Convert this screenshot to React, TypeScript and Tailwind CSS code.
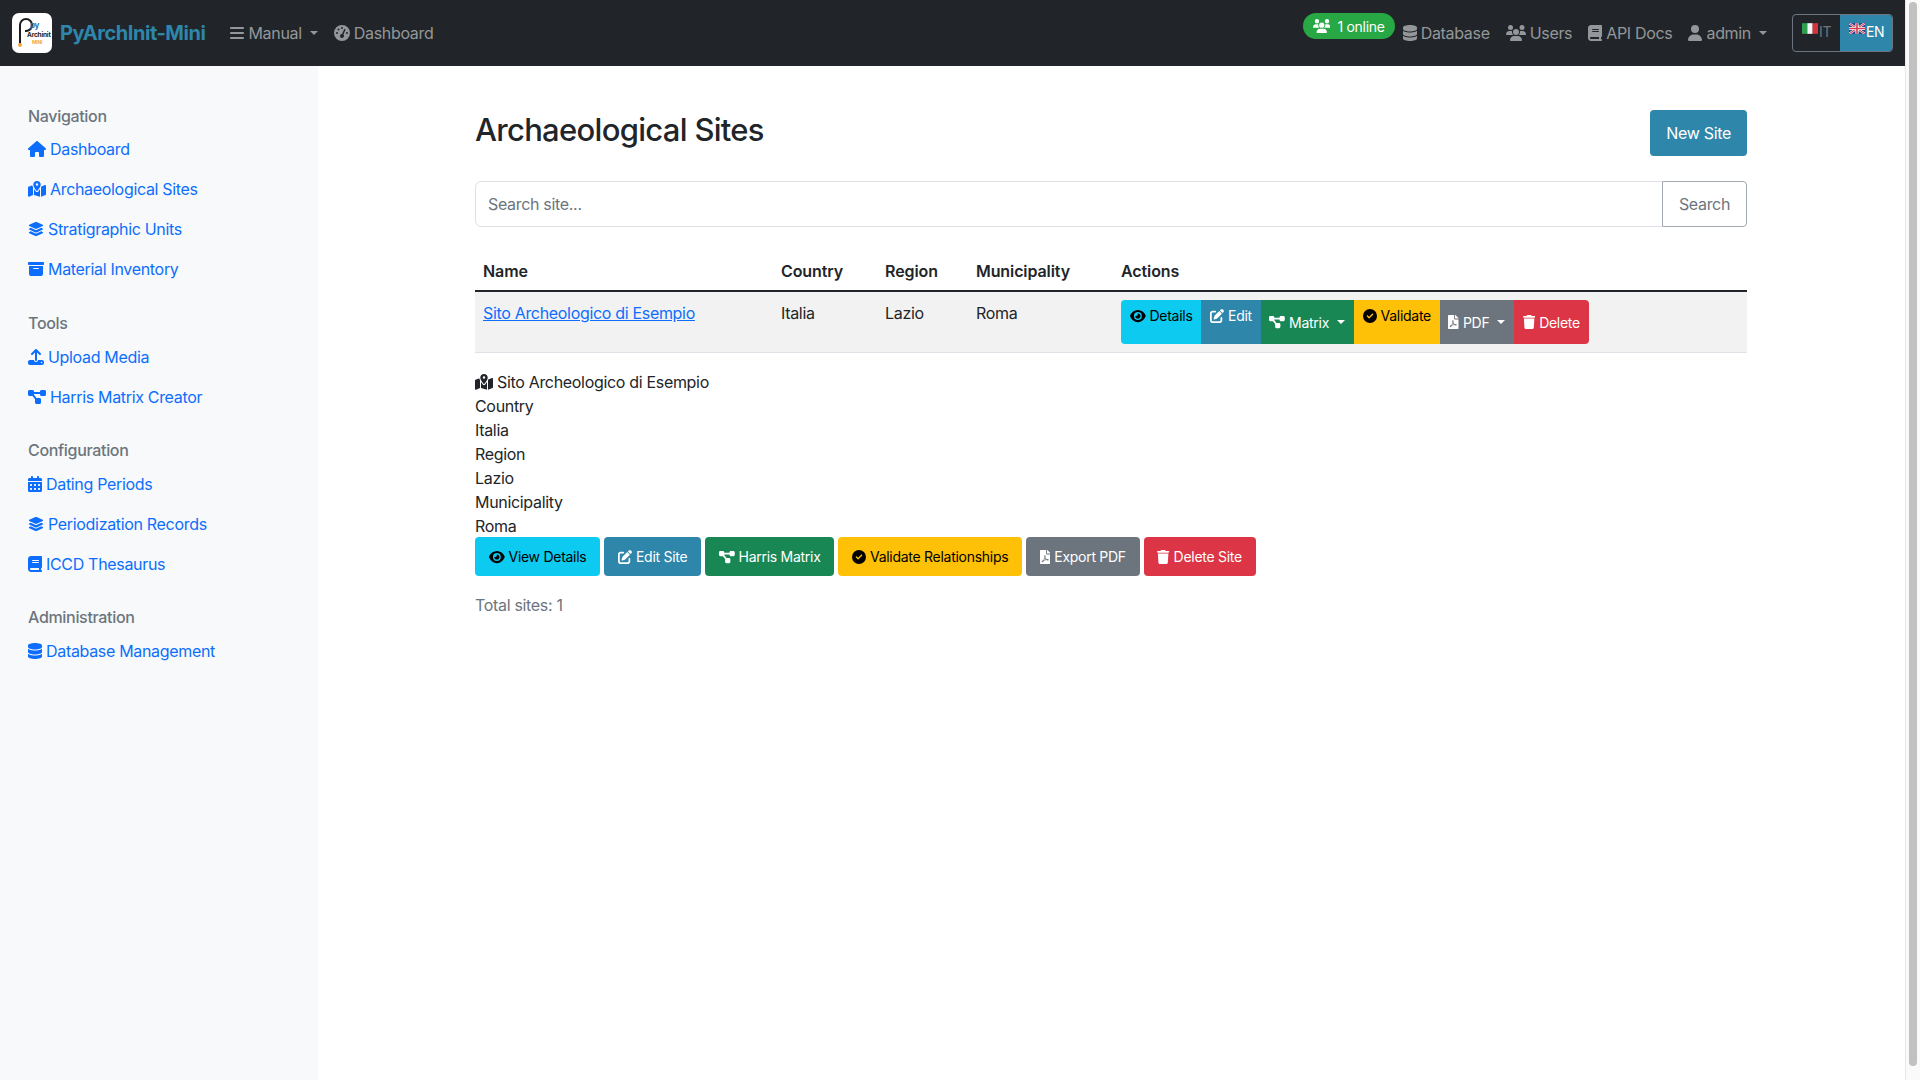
import type { ReactNode } from "react";
import { FaFilePdf } from "react-icons/fa";
import {
  FaBars,
  FaBook,
  FaBoxArchive,
  FaCalendarDays,
  FaCircleCheck,
  FaDatabase,
  FaDiagramProject,
  FaEye,
  FaGaugeHigh,
  FaHouse,
  FaLayerGroup,
  FaMapLocationDot,
  FaPenToSquare,
  FaTrash,
  FaUpload,
  FaUser,
  FaUsers,
} from "react-icons/fa6";

// icon widths, same ratios as the font-awesome glyphs at 1em high
const w448 = "h-[1em] w-[0.875em] shrink-0";
const w512 = "h-[1em] w-[1em] shrink-0";
const w576 = "h-[1em] w-[1.125em] shrink-0";
const w640 = "h-[1em] w-[1.25em] shrink-0";
const w384 = "h-[1em] w-[0.75em] shrink-0";

const sidebar = [
  {
    title: "Navigation",
    links: [
      { icon: <FaHouse className={w576} />, label: "Dashboard" },
      { icon: <FaMapLocationDot className={w576} />, label: "Archaeological Sites" },
      { icon: <FaLayerGroup className={w512} />, label: "Stratigraphic Units" },
      { icon: <FaBoxArchive className={w512} />, label: "Material Inventory" },
    ],
  },
  {
    title: "Tools",
    links: [
      { icon: <FaUpload className={w512} />, label: "Upload Media" },
      { icon: <FaDiagramProject className={w576} />, label: "Harris Matrix Creator" },
    ],
  },
  {
    title: "Configuration",
    links: [
      { icon: <FaCalendarDays className={w448} />, label: "Dating Periods" },
      { icon: <FaLayerGroup className={w512} />, label: "Periodization Records" },
      { icon: <FaBook className={w448} />, label: "ICCD Thesaurus" },
    ],
  },
  {
    title: "Administration",
    links: [{ icon: <FaDatabase className={w448} />, label: "Database Management" }],
  },
];

const details = ["Country", "Italia", "Region", "Lazio", "Municipality", "Roma"];

function Caret() {
  return <span className="ml-[4px] inline-block h-0 w-0 border-x-[4.5px] border-t-[4.5px] border-x-transparent border-t-current" />;
}

function NavLink({ icon, children, caret }: { icon: ReactNode; children: ReactNode; caret?: boolean }) {
  return (
    <a className="flex items-center gap-[4px] text-[#94979a]">
      {icon}
      {children}
      {caret && <Caret />}
    </a>
  );
}

function GroupButton({ className, icon, label, caret, raised }: { className: string; icon: ReactNode; label: string; caret?: boolean; raised?: boolean }) {
  return (
    <button className={`flex h-[44px] justify-center px-[8.75px] text-[14px] tracking-[-0.28px] ${raised ? "items-start pt-[5px]" : "items-center"} ${className}`}>
      <span className="flex items-center gap-[4px]">
        {icon}
        {label}
        {caret && <Caret />}
      </span>
    </button>
  );
}

function SiteButton({ className, icon, label }: { className: string; icon: ReactNode; label: string }) {
  return (
    <button className={`flex h-[39px] items-center gap-[4px] rounded-[4px] px-[13.75px] text-[14px] tracking-[-0.28px] ${className}`}>
      {icon}
      {label}
    </button>
  );
}

export default function App() {
  return (
    <div className="flex h-screen overflow-hidden bg-white font-['Inter','Liberation_Sans',sans-serif] text-[16px] tracking-[-0.32px] text-[#212529]">
      <div className="flex min-w-0 flex-1 flex-col">
        <nav className="flex h-[66px] shrink-0 items-center bg-[#212529] px-[12px]">
          <div className="h-[40px] w-[40px] rounded-[7px] bg-white">
            <svg viewBox="0 0 40 40" className="h-full w-full">
              <path d="M8 31V12a6 6 0 0 1 6-6a6 6 0 0 1 6 6a6 6 0 0 1-6 6h-1" fill="none" stroke="#1c1c1c" strokeWidth="2" />
              <circle cx="8" cy="32" r="2" fill="#f2a93b" />
              <text x="18" y="15" fontSize="8" fontWeight="700" fill="#2e6fa8">py</text>
              <text x="15" y="24" fontSize="6.5" fontWeight="700" fill="#222" letterSpacing="-0.2">Archinit</text>
              <text x="20" y="31" fontSize="5" fontWeight="700" fill="#f2a93b">MINI</text>
            </svg>
          </div>
          <span className="ml-[8px] text-[20px] font-bold tracking-[-0.45px] text-[#2e86ab]">PyArchInit-Mini</span>
          <div className="ml-[25px] flex items-center gap-[16px]">
            <NavLink icon={<FaBars className={w448} />} caret>Manual</NavLink>
            <NavLink icon={<FaGaugeHigh className={w512} />}>Dashboard</NavLink>
          </div>
          <div className="ml-auto flex items-center">
            <span className="-mt-[14px] flex h-[26px] items-center gap-[7px] rounded-full bg-[#28a745] px-[10px] text-[14px] tracking-[-0.28px] text-white">
              <FaUsers className={w640} />
              1 online
            </span>
            <div className="ml-[8px] flex items-center gap-[16px]">
              <NavLink icon={<FaDatabase className={w448} />}>Database</NavLink>
              <NavLink icon={<FaUsers className={w640} />}>Users</NavLink>
              <NavLink icon={<FaBook className={w448} />}>API Docs</NavLink>
              <NavLink icon={<FaUser className={w448} />} caret>admin</NavLink>
            </div>
            <div className="ml-[25px] flex h-[38px] w-[101px] overflow-hidden rounded-[4px] border border-[#6c757d] text-[14px]">
              <span className="flex w-[47px] items-start gap-[1px] pl-[9px] pt-[6px] text-[#6c757d]">
                <svg viewBox="0 0 3 2" className="mt-[2px] h-[11px] w-[16px]"><rect width="1" height="2" fill="#2e9e4f" /><rect x="1" width="1" height="2" fill="#f5f5f5" /><rect x="2" width="1" height="2" fill="#d8323c" /></svg>
                IT
              </span>
              <span className="flex flex-1 items-start gap-[1px] bg-[#2e86ab] pl-[9px] pt-[6px] text-white">
                <svg viewBox="0 0 30 20" className="mt-[2px] h-[11px] w-[16px]">
                  <rect width="30" height="20" fill="#2b3f87" />
                  <path d="M0 0L30 20M30 0L0 20" stroke="#fff" strokeWidth="4" />
                  <path d="M0 0L30 20M30 0L0 20" stroke="#cf3a4a" strokeWidth="2" />
                  <path d="M15 0V20M0 10H30" stroke="#fff" strokeWidth="6" />
                  <path d="M15 0V20M0 10H30" stroke="#cf3a4a" strokeWidth="3" />
                </svg>
                EN
              </span>
            </div>
          </div>
        </nav>

        <div className="flex min-h-0 flex-1">
          <aside className="w-[318px] shrink-0 bg-[#f8f9fa] pl-[28px] pt-[38px]">
            {sidebar.map((section) => (
              <div key={section.title} className="mb-[13.5px] first:mb-[14.5px] [&:first-child>div]:mb-[8.5px]">
                <div className="mb-[9.5px] h-[24px] font-medium text-[#6c757d]">{section.title}</div>
                <ul className="flex flex-col">
                  {section.links.map((link) => (
                    <li key={link.label} className="mb-[16px] flex h-[24px] items-center gap-[4px] text-[#0d6efd]">
                      {link.icon}
                      {link.label}
                    </li>
                  ))}
                </ul>
              </div>
            ))}
          </aside>

          <main className="min-w-0 flex-1 pl-[157px] pr-[158px] pt-[44px]">
            <div className="flex items-start justify-between">
              <h1 className="mt-[1px] text-[31px] font-medium leading-[38px] tracking-[-0.7px]">Archaeological Sites</h1>
              <button className="h-[46px] rounded-[4px] bg-[#2e86ab] px-[16px] text-white">New Site</button>
            </div>

            <div className="mt-[25px] flex h-[46px]">
              <input
                readOnly
                placeholder="Search site..."
                className="min-w-0 flex-1 rounded-l-[6px] border border-[#dee2e6] px-[12px] text-[16px] placeholder:text-[#6c757d]"
              />
              <button className="-ml-px w-[85px] rounded-r-[4px] border border-[#a3aab1] text-[#6c757d]">Search</button>
            </div>

            <table className="mt-[24px] w-full border-collapse">
              <thead>
                <tr className="h-[40px] border-b-2 border-[#212529] text-left tracking-[-0.1px]">
                  <th className="w-[298px] px-[8px] font-semibold">Name</th>
                  <th className="w-[104px] px-[8px] font-semibold">Country</th>
                  <th className="w-[91px] px-[8px] font-semibold">Region</th>
                  <th className="w-[145px] px-[8px] font-semibold">Municipality</th>
                  <th className="px-[8px] font-semibold">Actions</th>
                </tr>
              </thead>
              <tbody>
                <tr className="border-b border-[#dee2e6] bg-[#f2f2f2] align-top">
                  <td className="px-[8px] pb-[8px] pt-[9px]"><a className="text-[#0d6efd] underline">Sito Archeologico di Esempio</a></td>
                  <td className="px-[8px] pb-[8px] pt-[9px]">Italia</td>
                  <td className="px-[8px] pb-[8px] pt-[9px]">Lazio</td>
                  <td className="px-[8px] pb-[8px] pt-[9px]">Roma</td>
                  <td className="p-[8px]">
                    <div className="flex w-fit overflow-hidden rounded-[4px]">
                      <GroupButton raised className="bg-[#0dcaf0] text-black" icon={<FaEye className={w576} />} label="Details" />
                      <GroupButton raised className="bg-[#2e86ab] text-white" icon={<FaPenToSquare className={w512} />} label="Edit" />
                      <GroupButton caret className="bg-[#198754] text-white" icon={<FaDiagramProject className={w576} />} label="Matrix" />
                      <GroupButton raised className="bg-[#ffc107] text-black" icon={<FaCircleCheck className={w512} />} label="Validate" />
                      <GroupButton caret className="bg-[#6c757d] text-white" icon={<FaFilePdf className={w384} />} label="PDF" />
                      <GroupButton className="bg-[#dc3545] text-white" icon={<FaTrash className={w448} />} label="Delete" />
                    </div>
                  </td>
                </tr>
              </tbody>
            </table>

            <div className="mt-[17px]">
              <div className="flex h-[24px] items-center gap-[4px]"><FaMapLocationDot className={w576} />Sito Archeologico di Esempio</div>
              {details.map((line) => (
                <div key={line} className="h-[24px] leading-[24px]">{line}</div>
              ))}
            </div>
            <div className="-mt-px flex gap-[4px]">
              <SiteButton className="bg-[#0dcaf0] text-black" icon={<FaEye className={w576} />} label="View Details" />
              <SiteButton className="bg-[#2e86ab] text-white" icon={<FaPenToSquare className={w512} />} label="Edit Site" />
              <SiteButton className="bg-[#198754] text-white" icon={<FaDiagramProject className={w576} />} label="Harris Matrix" />
              <SiteButton className="bg-[#ffc107] text-black" icon={<FaCircleCheck className={w512} />} label="Validate Relationships" />
              <SiteButton className="bg-[#6c757d] text-white" icon={<FaFilePdf className={w384} />} label="Export PDF" />
              <SiteButton className="bg-[#dc3545] text-white" icon={<FaTrash className={w448} />} label="Delete Site" />
            </div>
            <p className="mt-[17px] text-[#6c757d]">Total sites: 1</p>
          </main>
        </div>
      </div>
      <div className="w-[15px] shrink-0 border-l border-[#e8e8e8] bg-[#fafafa] px-[3px] pt-[2px]">
        <div className="h-[1064px] rounded-full bg-[#c1c1c1]" />
      </div>
    </div>
  );
}
